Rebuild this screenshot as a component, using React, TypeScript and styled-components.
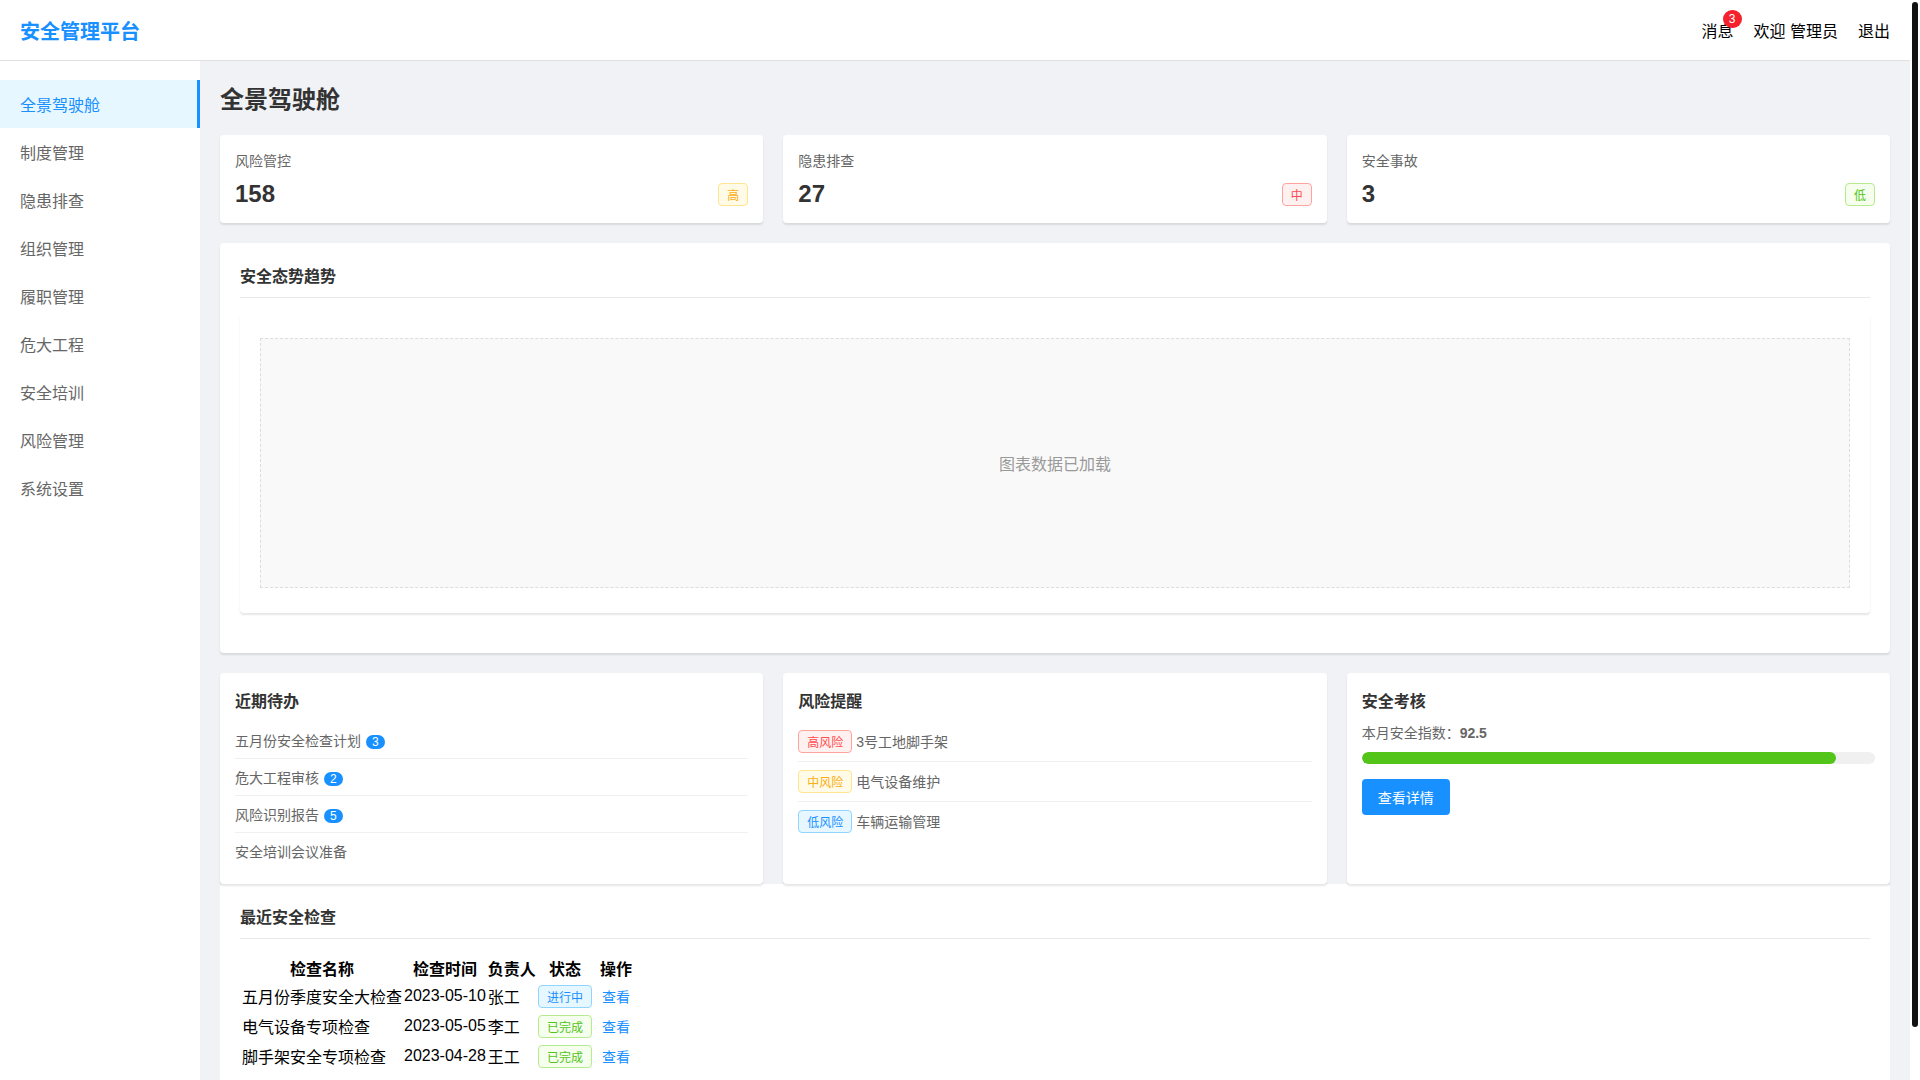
import React from 'react';
import styled, { createGlobalStyle } from 'styled-components';

type Tone = 'red' | 'gold' | 'green' | 'blue';

const tones: Record<Tone, { color: string; bg: string; border: string }> = {
  red: { color: '#ff4d4f', bg: '#fff1f0', border: '#ffa39e' },
  gold: { color: '#faad14', bg: '#fffbe6', border: '#ffe58f' },
  green: { color: '#52c41a', bg: '#f6ffed', border: '#b7eb8f' },
  blue: { color: '#1890ff', bg: '#e6f7ff', border: '#91d5ff' },
};

const GlobalStyle = createGlobalStyle`
  * {
    box-sizing: border-box;
  }

  body {
    margin: 0;
    overflow: hidden;
    font-family: "Liberation Sans", "Noto Sans CJK SC", sans-serif;
    background: #fff;
  }
`;

const Shell = styled.div`
  display: flex;
  height: 100vh;
`;

const Page = styled.div`
  flex: 1;
  min-width: 0;
  overflow-y: auto;
`;

const ScrollRail = styled.div`
  flex: 0 0 10px;
  padding: 2px;
  background: #fff;
`;

const ScrollThumb = styled.div`
  height: 1025px;
  background: #111;
  border-radius: 3px;
`;

const Header = styled.header`
  display: flex;
  justify-content: space-between;
  align-items: center;
  height: 61px;
  padding: 0 20px;
  background: #fff;
  border-bottom: 1px solid #e0e0e0;
`;

const Logo = styled.div`
  font-size: 20px;
  font-weight: bold;
  color: #1890ff;
`;

const HeaderActions = styled.div`
  display: flex;
  align-items: center;
  gap: 20px;
  font-size: 16px;
`;

const MessageLink = styled.span`
  position: relative;
`;

const MessageCount = styled.span`
  position: absolute;
  top: -8px;
  right: -8px;
  padding: 2px 6px;
  border-radius: 10px;
  background: #f5222d;
  color: #fff;
  font-size: 12px;
`;

const Body = styled.div`
  display: flex;
  background: #f0f2f5;
`;

const Sidebar = styled.nav`
  flex: 0 0 200px;
  padding-top: 19px;
  background: #fff;
`;

const MenuItem = styled.div<{ $active?: boolean }>`
  height: 48px;
  padding: 12px 20px;
  font-size: 16px;
  color: ${(p) => (p.$active ? '#1890ff' : '#666')};
  background: ${(p) => (p.$active ? '#e6f7ff' : 'transparent')};
  border-right: ${(p) => (p.$active ? '3px solid #1890ff' : 'none')};
`;

const Main = styled.main`
  flex: 1;
  min-width: 0;
  padding: 19px 20px 20px;
`;

const PageTitle = styled.h1`
  margin: 0 0 20px;
  font-size: 24px;
  font-weight: bold;
  color: #333;
`;

const StatRow = styled.div`
  display: grid;
  grid-template-columns: repeat(3, 1fr);
  gap: 20px;
  margin-bottom: 20px;
`;

const Card = styled.section`
  position: relative;
  padding: 15px;
  background: #fff;
  border-radius: 4px;
  box-shadow: 0 2px 2px rgba(0, 0, 0, 0.1);
`;

const StatLabel = styled.div`
  margin-bottom: 10px;
  font-size: 14px;
  color: #666;
`;

const StatValueRow = styled.div`
  display: flex;
  justify-content: space-between;
  align-items: center;
`;

const StatValue = styled.div`
  font-size: 24px;
  font-weight: bold;
  color: #333;
`;

const Tag = styled.span<{ $tone: Tone }>`
  display: inline-block;
  padding: 2px 8px;
  font-size: 12px;
  border-radius: 4px;
  color: ${(p) => tones[p.$tone].color};
  background: ${(p) => tones[p.$tone].bg};
  border: 1px solid ${(p) => tones[p.$tone].border};
`;

const Panel = styled.section`
  padding: 20px;
  background: #fff;
  border-radius: 4px;
`;

const ChartPanel = styled(Panel)`
  margin-bottom: 20px;
  box-shadow: 0 2px 2px rgba(0, 0, 0, 0.1);
`;

const PanelTitle = styled.h3`
  margin: 0 0 16px;
  padding-bottom: 10px;
  font-size: 16px;
  font-weight: bold;
  color: #333;
  border-bottom: 1px solid #e8e8e8;
`;

const ChartWrap = styled.div`
  margin-bottom: 20px;
  padding: 24px 20px 25px;
  border-radius: 4px;
  box-shadow: 0 2px 2px rgba(0, 0, 0, 0.1);
`;

const ChartPlaceholder = styled.div`
  display: flex;
  align-items: center;
  justify-content: center;
  height: 250px;
  font-size: 16px;
  color: #999;
  background: #f9f9f9;
  border: 1px dashed #ddd;
`;

const InfoRow = styled.div`
  display: grid;
  grid-template-columns: repeat(3, 1fr);
  gap: 20px;
`;

const CardTitle = styled.h4`
  margin: 0 0 10px;
  font-size: 16px;
  font-weight: bold;
  color: #333;
`;

const ListItem = styled.div`
  padding: 8px 0;
  font-size: 14px;
  color: #666;
  border-bottom: 1px solid #f0f0f0;

  &:last-child {
    border-bottom: none;
  }
`;

const CountBadge = styled.span`
  margin-left: 5px;
  padding: 0 6px;
  font-size: 12px;
  color: #fff;
  background: #1890ff;
  border-radius: 10px;
`;

const ScoreText = styled.div`
  font-size: 14px;
  color: #666;
`;

const Track = styled.div`
  height: 12px;
  margin-top: 10px;
  overflow: hidden;
  background: #f0f0f0;
  border-radius: 6px;
`;

const Fill = styled.div`
  height: 100%;
  background: #52c41a;
  border-radius: 6px;
`;

const PrimaryButton = styled.button`
  display: block;
  margin-top: 15px;
  padding: 8px 16px;
  font-family: inherit;
  font-size: 14px;
  color: #fff;
  background: #1890ff;
  border: none;
  border-radius: 4px;
`;

const Table = styled.table`
  margin-left: 1px;
  border-collapse: collapse;
`;

const ViewLink = styled.a`
  display: inline-block;
  padding: 4px 8px;
  font-size: 14px;
  color: #1890ff;
`;

const menu = ['全景驾驶舱', '制度管理', '隐患排查', '组织管理', '履职管理', '危大工程', '安全培训', '风险管理', '系统设置'];

const stats: { label: string; value: number; level: string; tone: Tone }[] = [
  { label: '风险管控', value: 158, level: '高', tone: 'gold' },
  { label: '隐患排查', value: 27, level: '中', tone: 'red' },
  { label: '安全事故', value: 3, level: '低', tone: 'green' },
];

const todos: { text: string; count?: number }[] = [
  { text: '五月份安全检查计划', count: 3 },
  { text: '危大工程审核', count: 2 },
  { text: '风险识别报告', count: 5 },
  { text: '安全培训会议准备' },
];

const risks: { level: string; tone: Tone; text: string }[] = [
  { level: '高风险', tone: 'red', text: '3号工地脚手架' },
  { level: '中风险', tone: 'gold', text: '电气设备维护' },
  { level: '低风险', tone: 'blue', text: '车辆运输管理' },
];

const inspections: { name: string; date: string; owner: string; status: string; tone: Tone }[] = [
  { name: '五月份季度安全大检查', date: '2023-05-10', owner: '张工', status: '进行中', tone: 'blue' },
  { name: '电气设备专项检查', date: '2023-05-05', owner: '李工', status: '已完成', tone: 'green' },
  { name: '脚手架安全专项检查', date: '2023-04-28', owner: '王工', status: '已完成', tone: 'green' },
];

const App: React.FC = () => {
  const score = 92.5;

  return (
    <Shell>
      <GlobalStyle />
      <Page>
        <Header>
          <Logo>安全管理平台</Logo>
          <HeaderActions>
            <MessageLink>
              消息
              <MessageCount>3</MessageCount>
            </MessageLink>
            <span>欢迎 管理员</span>
            <span>退出</span>
          </HeaderActions>
        </Header>
        <Body>
          <Sidebar>
            {menu.map((item, i) => (
              <MenuItem key={item} $active={i === 0}>
                {item}
              </MenuItem>
            ))}
          </Sidebar>
          <Main>
            <PageTitle>全景驾驶舱</PageTitle>
            <StatRow>
              {stats.map((s) => (
                <Card key={s.label}>
                  <StatLabel>{s.label}</StatLabel>
                  <StatValueRow>
                    <StatValue>{s.value}</StatValue>
                    <Tag $tone={s.tone}>{s.level}</Tag>
                  </StatValueRow>
                </Card>
              ))}
            </StatRow>
            <ChartPanel>
              <PanelTitle>安全态势趋势</PanelTitle>
              <ChartWrap>
                <ChartPlaceholder>图表数据已加载</ChartPlaceholder>
              </ChartWrap>
            </ChartPanel>
            <InfoRow>
              <Card>
                <CardTitle>近期待办</CardTitle>
                {todos.map((t) => (
                  <ListItem key={t.text}>
                    {t.text}
                    {t.count !== undefined && <CountBadge>{t.count}</CountBadge>}
                  </ListItem>
                ))}
              </Card>
              <Card>
                <CardTitle>风险提醒</CardTitle>
                {risks.map((r) => (
                  <ListItem key={r.text}>
                    <Tag $tone={r.tone}>{r.level}</Tag> {r.text}
                  </ListItem>
                ))}
              </Card>
              <Card>
                <CardTitle>安全考核</CardTitle>
                <ScoreText>
                  本月安全指数：<strong>{score}</strong>
                </ScoreText>
                <Track>
                  <Fill style={{ width: `${score}%` }} />
                </Track>
                <PrimaryButton>查看详情</PrimaryButton>
              </Card>
            </InfoRow>
            <Panel>
              <PanelTitle>最近安全检查</PanelTitle>
              <Table>
                <thead>
                  <tr>
                    <th>检查名称</th>
                    <th>检查时间</th>
                    <th>负责人</th>
                    <th>状态</th>
                    <th>操作</th>
                  </tr>
                </thead>
                <tbody>
                  {inspections.map((row) => (
                    <tr key={row.name}>
                      <td>{row.name}</td>
                      <td>{row.date}</td>
                      <td>{row.owner}</td>
                      <td>
                        <Tag $tone={row.tone}>{row.status}</Tag>
                      </td>
                      <td>
                        <ViewLink>查看</ViewLink>
                      </td>
                    </tr>
                  ))}
                </tbody>
              </Table>
            </Panel>
          </Main>
        </Body>
      </Page>
      <ScrollRail>
        <ScrollThumb />
      </ScrollRail>
    </Shell>
  );
};

export default App;
